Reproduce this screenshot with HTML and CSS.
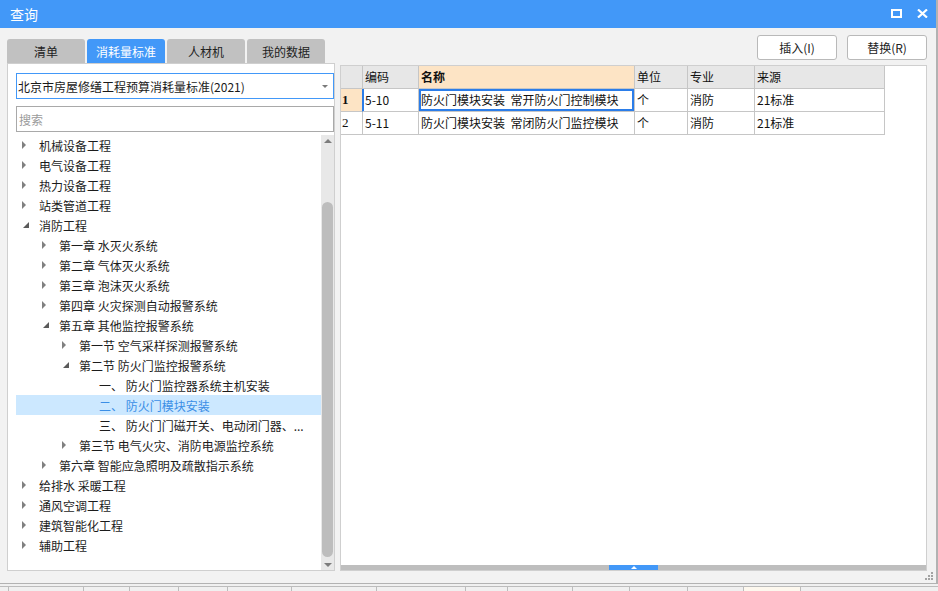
FILE: index.html
```html
<!DOCTYPE html>
<html lang="zh-CN">
<head>
<meta charset="utf-8">
<title>查询</title>
<link rel="stylesheet" href="styles.css">
</head>
<body>
<div class="window">
  <div class="titlebar">
    <span class="title">查询</span>
    <div class="winctl">
      <svg class="ic" width="11" height="9" viewBox="0 0 11 9"><rect x="1" y="1" width="9" height="7" fill="none" stroke="#fff" stroke-width="2"/></svg>
      <svg class="ic" width="11" height="9" viewBox="0 0 11 9"><path d="M1 0.5 L10 8.5 M10 0.5 L1 8.5" stroke="#fff" stroke-width="2.2" fill="none"/></svg>
    </div>
  </div>
  <div class="body">
    <div class="leftcol">
      <div class="tabs">
        <div class="tab">清单</div>
        <div class="tab active">消耗量标准</div>
        <div class="tab">人材机</div>
        <div class="tab">我的数据</div>
      </div>
      <div class="lpanel">
        <div class="combo"><span>北京市房屋修缮工程预算消耗量标准(2021)</span><i class="caret"></i></div>
        <input class="search" type="text" placeholder="搜索">
        <div class="treewrap">
          <div class="tree">
            <div class="row l0"><i class="tw c"></i><span>机械设备工程</span></div>
            <div class="row l0"><i class="tw c"></i><span>电气设备工程</span></div>
            <div class="row l0"><i class="tw c"></i><span>热力设备工程</span></div>
            <div class="row l0"><i class="tw c"></i><span>站类管道工程</span></div>
            <div class="row l0"><i class="tw e"></i><span>消防工程</span></div>
            <div class="row l1"><i class="tw c"></i><span>第一章 水灭火系统</span></div>
            <div class="row l1"><i class="tw c"></i><span>第二章 气体灭火系统</span></div>
            <div class="row l1"><i class="tw c"></i><span>第三章 泡沫灭火系统</span></div>
            <div class="row l1"><i class="tw c"></i><span>第四章 火灾探测自动报警系统</span></div>
            <div class="row l1"><i class="tw e"></i><span>第五章 其他监控报警系统</span></div>
            <div class="row l2"><i class="tw c"></i><span>第一节 空气采样探测报警系统</span></div>
            <div class="row l2"><i class="tw e"></i><span>第二节 防火门监控报警系统</span></div>
            <div class="row l3"><i class="tw"></i><span>一、 防火门监控器系统主机安装</span></div>
            <div class="row l3 sel"><i class="tw"></i><span>二、 防火门模块安装</span></div>
            <div class="row l3"><i class="tw"></i><span>三、 防火门门磁开关、电动闭门器、...</span></div>
            <div class="row l2"><i class="tw c"></i><span>第三节 电气火灾、消防电源监控系统</span></div>
            <div class="row l1"><i class="tw c"></i><span>第六章 智能应急照明及疏散指示系统</span></div>
            <div class="row l0"><i class="tw c"></i><span>给排水 采暖工程</span></div>
            <div class="row l0"><i class="tw c"></i><span>通风空调工程</span></div>
            <div class="row l0"><i class="tw c"></i><span>建筑智能化工程</span></div>
            <div class="row l0"><i class="tw c"></i><span>辅助工程</span></div>
          </div>
          <div class="vscroll">
            <i class="vs-up"></i>
            <div class="vs-thumb"></div>
            <i class="vs-down"></i>
          </div>
        </div>
      </div>
    </div>
    <div class="rightcol">
      <div class="btns">
        <button class="btn" type="button">插入(I)</button>
        <button class="btn" type="button">替换(R)</button>
      </div>
      <div class="rpanel">
        <table class="grid">
          <colgroup>
            <col class="c-no"><col class="c-code"><col class="c-name"><col class="c-unit"><col class="c-major"><col class="c-src">
          </colgroup>
          <thead>
            <tr><th></th><th>编码</th><th class="hl">名称</th><th>单位</th><th>专业</th><th>来源</th></tr>
          </thead>
          <tbody>
            <tr><td class="no cur">1</td><td class="code cur">5-10</td><td class="focus">防火门模块安装&nbsp; 常开防火门控制模块</td><td>个</td><td>消防</td><td>21标准</td></tr>
            <tr><td class="no">2</td><td class="code">5-11</td><td>防火门模块安装&nbsp; 常闭防火门监控模块</td><td>个</td><td>消防</td><td>21标准</td></tr>
          </tbody>
        </table>
        <div class="hscroll"><div class="hthumb"></div></div>
      </div>
    </div>
  </div>
  <svg class="grip" width="8" height="8" viewBox="0 0 8 8">
    <rect x="6" y="0" width="2" height="2" fill="#a3a3a3"/>
    <rect x="3" y="3" width="2" height="2" fill="#a3a3a3"/>
    <rect x="6" y="3" width="2" height="2" fill="#a3a3a3"/>
    <rect x="0" y="6" width="2" height="2" fill="#a3a3a3"/>
    <rect x="3" y="6" width="2" height="2" fill="#a3a3a3"/>
    <rect x="6" y="6" width="2" height="2" fill="#a3a3a3"/>
  </svg>
</div>
<div class="bgstrip">
  <div class="bgrow">
    <div class="bc first"></div><div class="bc"></div><div class="bc"></div><div class="bc"></div><div class="bc"></div>
    <div class="bc"></div><div class="bc"></div><div class="bc"></div><div class="bc"></div><div class="bc"></div>
    <div class="bc"></div><div class="bc"></div><div class="bc"></div><div class="bc peach"></div><div class="bc"></div>
  </div>
</div>
</body>
</html>
```
FILE: styles.css
```css
* { box-sizing: border-box; }

body {
  margin: 0;
  width: 938px;
  height: 591px;
  overflow: hidden;
  background: #f0f0f0;
  font-family: "Noto Sans CJK SC", "Noto Sans", sans-serif;
  font-size: 12px;
  color: #1f1f1f;
}

.window {
  position: relative;
  width: 938px;
  height: 584px;
  background: #f2f2f2;
  border-right: 2px solid #b2b2b2;
  border-bottom: 1px solid #b2b2b2;
  display: flex;
  flex-direction: column;
}

.titlebar {
  flex: none;
  height: 28px;
  background: #4298f8;
  color: #fff;
  display: flex;
  align-items: center;
  justify-content: space-between;
  padding: 0 8px 0 10px;
}
.title { font-size: 14px; line-height: 28px; }
.winctl { display: flex; align-items: center; gap: 15px; margin-top: -1px; }
.ic { display: block; }

.body {
  flex: 1;
  min-height: 0;
  display: flex;
  gap: 5px;
  padding: 0 9px 12px 7px;
}

/* left column */
.leftcol {
  width: 328px;
  flex: none;
  display: flex;
  flex-direction: column;
  padding-top: 11px;
}
.tabs { display: flex; gap: 2px; height: 24px; flex: none; }
.tab {
  width: 78px;
  background: #c1c1c1;
  border-radius: 3px 3px 0 0;
  display: flex;
  align-items: center;
  justify-content: center;
  color: #222;
}
.tab.active { background: #4298f8; color: #fff; }

.lpanel {
  flex: 1;
  min-height: 0;
  background: #fff;
  border: 1px solid #cfcfcf;
  padding: 9px 0 0 8px;
  display: flex;
  flex-direction: column;
}
.combo {
  flex: none;
  height: 26px;
  border: 1px solid #4298f8;
  display: flex;
  align-items: center;
  justify-content: space-between;
  padding: 0 5px 0 1px;
  color: #1a1a1a;
}
.caret {
  width: 0;
  height: 0;
  border-left: 3px solid transparent;
  border-right: 3px solid transparent;
  border-top: 3px solid #7a7a7a;
}
.search {
  flex: none;
  margin: 7px 0 0 0;
  width: 100%;
  height: 26px;
  border: 1px solid #a9a9a9;
  padding: 0 2px;
  font: inherit;
  outline: none;
  background: #fff;
}
.search::placeholder { color: #9b9b9b; }

.treewrap { margin-top: 3px; flex: 1; min-height: 0; display: flex; }
.tree { flex: 1; min-width: 0; }
.row {
  height: 20px;
  display: flex;
  align-items: center;
  white-space: nowrap;
  overflow: hidden;
  padding-left: 6px;
  color: #1c1c1c;
}
.row.l1 { padding-left: 26px; }
.row.l2 { padding-left: 46px; }
.row.l3 { padding-left: 66px; }
.row.sel { background: #cce8ff; color: #3a8ee6; }
.tw {
  flex: none;
  width: 8px;
  height: 8px;
  margin-right: 9px;
  display: flex;
  align-items: center;
}
.tw.c::before {
  content: "";
  display: block;
  width: 0;
  height: 0;
  border-left: 4px solid #808080;
  border-top: 4px solid transparent;
  border-bottom: 4px solid transparent;
}
.tw.e::before {
  content: "";
  display: block;
  width: 0;
  height: 0;
  margin-left: 1px;
  border-left: 6px solid transparent;
  border-bottom: 6px solid #5a5a5a;
}

.vscroll {
  width: 13px;
  flex: none;
  background: #e8e8e8;
  display: flex;
  flex-direction: column;
  align-items: center;
}
.vs-up {
  margin-top: 4px;
  width: 0;
  height: 0;
  border-left: 4px solid transparent;
  border-right: 4px solid transparent;
  border-bottom: 4px solid #7c7c7c;
}
.vs-thumb {
  margin-top: 59px;
  width: 11px;
  height: 355px;
  background: #bdbdbd;
  border-radius: 6px;
}
.vs-down {
  margin-top: auto;
  margin-bottom: 3px;
  width: 0;
  height: 0;
  border-left: 4px solid transparent;
  border-right: 4px solid transparent;
  border-top: 4px solid #7c7c7c;
}

/* right column */
.rightcol {
  flex: 1;
  min-width: 0;
  display: flex;
  flex-direction: column;
  padding-top: 7px;
}
.btns { display: flex; justify-content: flex-end; gap: 10px; height: 25px; flex: none; }
.btn {
  width: 80px;
  height: 25px;
  padding: 0;
  background: #fff;
  border: 1px solid #b9b9b9;
  border-radius: 3px;
  font: inherit;
  color: #222;
}
.rpanel {
  margin-top: 5px;
  flex: 1;
  min-height: 0;
  background: #fff;
  border: 1px solid #cfcfcf;
  display: flex;
  flex-direction: column;
}

.grid {
  border-collapse: separate;
  border-spacing: 0;
  table-layout: fixed;
  width: 544px;
  color: #111;
}
.c-no { width: 22px; }
.c-code { width: 56px; }
.c-name { width: 216px; }
.c-unit { width: 53px; }
.c-major { width: 67px; }
.c-src { width: 130px; }
.grid th, .grid td {
  border-right: 1px solid #c6c6c6;
  border-bottom: 1px solid #c6c6c6;
  line-height: 22px;
  padding: 0 0 0 2px;
  text-align: left;
  font-weight: normal;
  white-space: nowrap;
  overflow: hidden;
}
.grid th { background: #e7e7e7; }
.grid th.hl { background: #fde4c5; font-weight: bold; }
.grid td.no { padding-left: 1px; font-family: "Liberation Serif", serif; font-size: 13px; }
.grid td.no.cur { background: #fde4c5; font-weight: bold; border-right-color: #2b7de9; }
.grid td.code.cur { box-shadow: inset 1px 0 0 #2b7de9; }
.grid td.focus { box-shadow: inset 0 0 0 2px #2b7de9; }

.hscroll {
  margin-top: auto;
  flex: none;
  height: 5px;
  background: #bebebe;
  display: flex;
}
.hthumb {
  margin-left: 268px;
  width: 49px;
  background: #4298f8;
  display: flex;
  justify-content: center;
  align-items: center;
}
.hthumb::before {
  content: "";
  width: 0;
  height: 0;
  border-left: 3px solid transparent;
  border-right: 3px solid transparent;
  border-bottom: 3px solid #fff;
}

.grip { position: absolute; right: 3px; bottom: 3px; }

/* background application strip below the dialog */
.bgstrip { height: 7px; padding-top: 2px; background: #f0f0f0; }
.bgrow {
  height: 5px;
  display: grid;
  grid-template-columns: 8px 75px 46px 49px 49px 64px 85px 89px 42px 65px 57px 58px 56px 57px 1fr;
  border-top: 1px solid #bcbcbc;
}
.bc { border-left: 1px solid #bcbcbc; }
.bc.first { border-left: 0; }
.bc.peach { background: #fdf8ee; }
```
